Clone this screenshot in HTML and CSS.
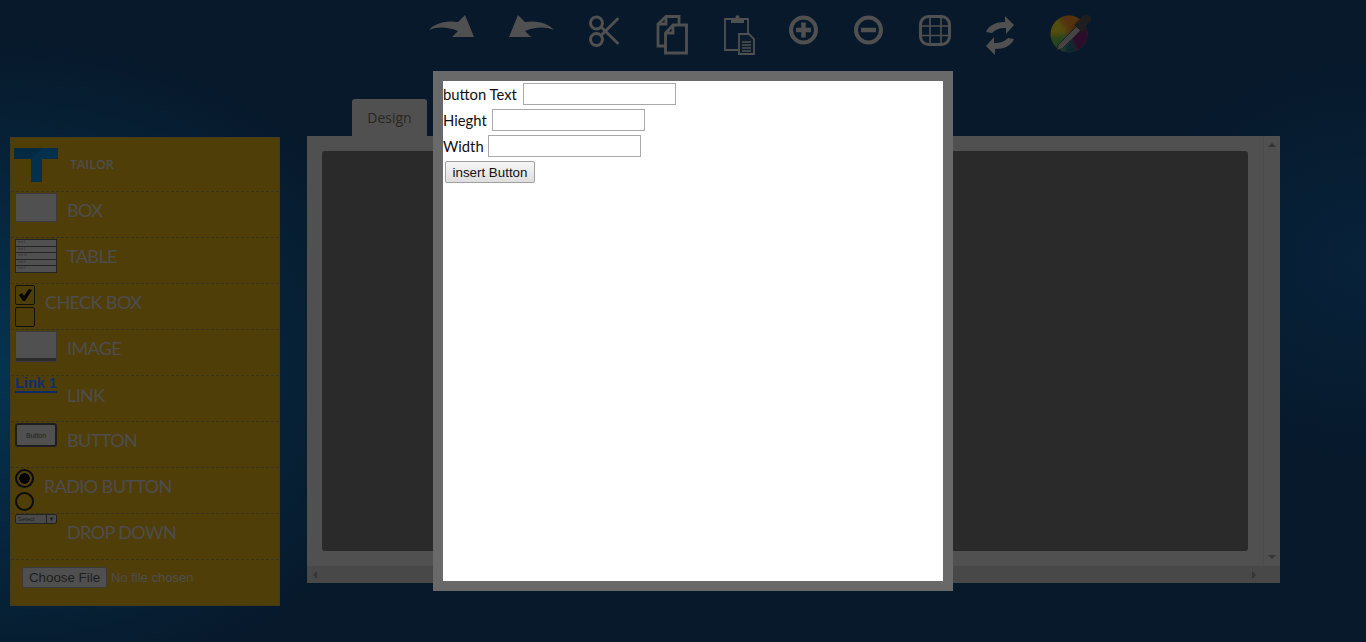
FILE: index.html
```html
<!DOCTYPE html>
<html lang="en">
<head>
<meta charset="utf-8">
<title>Tailor</title>
<link rel="stylesheet" href="styles.css">
</head>
<body>
<header class="toolbar">
  <svg class="ic" width="45" height="60" viewBox="429 0 45 60"><path class="fill" d="M429 30C434 24 444 20 458 22L465 15L474 37L452 37L458 31C449 27 438 26 429 30Z"/></svg>
  <svg class="ic" width="47" height="60" viewBox="508 0 47 60"><path class="fill" d="M554 30C549 24 539 20 525 22L518 15L509 37L531 37L525 31C534 27 545 26 554 30Z"/></svg>
  <svg class="ic" width="33" height="60" viewBox="589 0 33 60"><g class="line" stroke-width="3"><circle cx="596.500" cy="23" r="6"/><circle cx="596.500" cy="39.500" r="6"/><path d="M601 27L617.500 43M601 35.500L617.500 19" stroke-linecap="round"/></g></svg>
  <svg class="ic" width="33" height="60" viewBox="656 0 33 60"><g class="line" stroke-width="2.800"><path d="M665 46H658V24L666 16.500H679V25"/><path d="M666 16.500V24H658"/><path d="M673 25H686.500V53H665.500V33Z"/><path d="M673 25V33H665.500"/></g></svg>
  <svg class="ic" width="32" height="60" viewBox="723 0 32 60"><path class="line" stroke-width="1.800" d="M738 50H725V19H748V33"/><path class="fill" d="M731 19H735L736 15.500H739L740 19H744V23H731Z"/><path class="line-doc" d="M739 34H749L754 39V54H739Z"/><path class="line" stroke-width="1.300" d="M742 42H751M742 45H751M742 48H751M742 51H751"/></svg>
  <svg class="ic" width="31" height="60" viewBox="789 0 31 60"><circle class="line" stroke-width="4" cx="803.500" cy="30" r="12.500"/><path class="line" stroke-width="4.500" d="M796 30H811M803.500 22.500V37.500"/></svg>
  <svg class="ic" width="31" height="60" viewBox="854 0 31 60"><circle class="line" stroke-width="4" cx="868.500" cy="30" r="12.500"/><path class="line" stroke-width="4.500" d="M861 30H876"/></svg>
  <svg class="ic" width="32" height="60" viewBox="919 0 32 60"><g class="line"><rect x="920.500" y="16.500" width="29" height="28" rx="8" stroke-width="3"/><path stroke-width="1.600" d="M930 16V45M941 16V45M920 26H950M920 35.500H950"/></g></svg>
  <svg class="ic" width="31" height="60" viewBox="985 0 31 60"><path class="fill" d="M986 32C989 25 996 22 1005 22L1005 16L1014 25L1006 34L1006 28C1000 28 996 29 992 33Z"/><path class="fill" d="M1014 39C1011 46 1004 49 995 49L995 55L986 46L994 37L994 43C1000 43 1004 42 1008 38Z"/></svg>
  <svg class="ic" width="42" height="60" viewBox="1050 0 42 60">
    <defs>
      <clipPath id="wheel"><circle cx="1069" cy="34" r="18.500"/></clipPath>
      <filter id="soft"><feGaussianBlur stdDeviation="2.500"/></filter>
    </defs>
    <g clip-path="url(#wheel)">
      <circle cx="1069" cy="34" r="20" fill="#3a2d12"/>
      <g filter="url(#soft)">
        <path fill="#54300e" d="M1069 34L1056 12H1086Z"/>
        <path fill="#55500c" d="M1069 34L1056 14L1046 36Z"/>
        <path fill="#24461a" d="M1069 34L1046 38L1062 56Z"/>
        <path fill="#0c2636" d="M1069 34L1062 56H1080Z"/>
        <path fill="#2a0c2c" d="M1069 34L1080 56L1092 38L1086 20Z"/>
      </g>
    </g>
    <path fill="#444" stroke="#222" d="M1058 45L1057 50L1062 49L1081 30L1077 26Z"/>
    <path fill="#1e1e1e" d="M1074 25L1081 18C1084 13 1090 14 1091 18C1092 21 1090 23 1087 24L1083 33Z"/>
  </svg>
</header>

<main class="workspace">
  <aside class="palette">
    <div class="row row-brand">
      <svg class="logo" width="44" height="34" viewBox="0 0 44 34"><path fill="#022a43" d="M0 0H44V11H28V34H17V11H0Z"/><path fill="#03304d" d="M17 11L28 0H44V11H28V34H17Z"/></svg>
      <span class="brand">TAILOR</span>
    </div>
    <div class="row"><div class="thumb thumb-box"></div><span class="label">BOX</span></div>
    <div class="row">
      <div class="thumb thumb-table">
        <span class="cell">text 1</span><span class="cell">text 2</span><span class="cell">text 10</span><span class="cell">text 4</span><span class="cell">text 5</span>
      </div>
      <span class="label">TABLE</span>
    </div>
    <div class="row row-short">
      <div class="stack">
        <div class="check"><svg width="18" height="18" viewBox="0 0 18 18"><path fill="#000" d="M3 9L6 7L8 10L13 3L16 4L9 15H7Z"/></svg></div>
        <div class="check"></div>
      </div>
      <span class="label">CHECK BOX</span>
    </div>
    <div class="row"><div class="thumb thumb-image"><div class="player"></div></div><span class="label">IMAGE</span></div>
    <div class="row"><div class="thumb thumb-link">Link 1</div><span class="label label-low">LINK</span></div>
    <div class="row"><div class="thumb thumb-button">Button</div><span class="label">BUTTON</span></div>
    <div class="row row-short">
      <div class="stack stack-radio">
        <div class="radio radio-on"></div>
        <div class="radio"></div>
      </div>
      <span class="label">RADIO BUTTON</span>
    </div>
    <div class="row"><div class="thumb thumb-select"><span class="sel-text">Select</span><span class="sel-arrow">▼</span></div><span class="label">DROP DOWN</span></div>
    <div class="row-file">
      <button class="file-btn" type="button">Choose File</button>
      <span class="file-text">No file chosen</span>
    </div>
  </aside>

  <section class="editor">
    <div class="tab">Design</div>
    <div class="pane">
      <div class="pane-body">
        <div class="pane-view"><div class="canvas"></div></div>
        <div class="vbar"><i class="arr arr-up"></i><i class="arr arr-down"></i></div>
      </div>
      <div class="hbar"><i class="arr arr-left"></i><i class="arr arr-right"></i></div>
    </div>
  </section>
</main>

<div class="modal">
  <form class="modal-body">
    <div class="field"><label>button Text</label><input type="text"></div>
    <div class="field"><label class="lbl-height">Hieght</label><input type="text"></div>
    <div class="field"><label class="lbl-width">Width</label><input type="text"></div>
    <button class="insert" type="button">insert Button</button>
  </form>
</div>
</body>
</html>
```

FILE: styles.css
```css
* { box-sizing: border-box; }

html, body {
  margin: 0;
  height: 642px;
  overflow: hidden;
}

body {
  background-color: #07192b;
  background-image:
    radial-gradient(ellipse 420px 330px at 0 370px, #043350 0, rgba(4, 51, 80, 0) 100%),
    radial-gradient(ellipse 240px 200px at 1366px 260px, #07223a 0, rgba(7, 34, 58, 0) 100%);
  font-family: "Lato", "Open Sans", sans-serif;
}

.toolbar {
  display: flex;
  gap: 34px;
  height: 99px;
  padding-left: 429px;
}

.ic { display: block; flex: none; }

.fill { fill: #505050; }
.line { fill: none; stroke: #505050; }
.line-doc { fill: #0a1c2e; stroke: #505050; stroke-width: 1.8; }

.workspace {
  display: flex;
  align-items: flex-start;
  padding-left: 10px;
}

/* left palette */
.palette {
  flex: none;
  width: 270px;
  height: 469px;
  margin-top: 38px;
  background: #503e08;
  border: 1px solid #453b1a;
  color: #4d4d4f;
}

.row {
  display: flex;
  align-items: flex-start;
  height: 46px;
  padding-left: 4px;
  border-bottom: 1px dashed #37331c;
}

.row-brand {
  height: 54px;
  padding: 10px 0 0 3px;
}

.logo { flex: none; }

.brand {
  margin: 8px 0 0 12px;
  font-family: "Open Sans", sans-serif;
  font-size: 12.5px;
  font-weight: 600;
  line-height: 18px;
}

.label {
  margin: 5px 0 0 10px;
  font-size: 18px;
  letter-spacing: -0.6px;
  line-height: 26px;
  white-space: nowrap;
}

.label-low { margin-top: 6px; }

.thumb {
  flex: none;
  width: 42px;
  margin-top: 1px;
}

.thumb-box {
  height: 29px;
  background: #505050;
  border: 1px solid #3b3b3b;
}

.thumb-table {
  display: flex;
  flex-direction: column;
  gap: 1px;
  height: 34px;
  padding: 1px;
  background: #242424;
}

.cell {
  flex: 1;
  padding-left: 2px;
  background: #505050;
  color: #2c2c2c;
  font: 3px/5px "Liberation Sans", sans-serif;
}

.thumb-image {
  display: flex;
  flex-direction: column;
  justify-content: flex-end;
  height: 31px;
  background: #505050;
  border: 1px solid #3b3b3b;
}

.player { height: 3px; background: #2b2b2b; }

.thumb-link {
  height: 17px;
  margin-top: 0;
  border-bottom: 2px solid #0b2a6a;
  color: #0f2f70;
  font: bold 14.500px/15px "Liberation Sans", sans-serif;
}

.thumb-button {
  display: flex;
  align-items: center;
  justify-content: center;
  height: 24px;
  background: #505050;
  border: 2px solid #1e1e1e;
  border-radius: 3px;
  color: #222;
  font: 7px "Liberation Sans", sans-serif;
}

.thumb-select {
  display: flex;
  justify-content: space-between;
  height: 10px;
  margin-top: 0;
  background: #4a4a4a;
  border: 1px solid #222;
  border-radius: 2px;
  color: #1d1d1d;
  font: 6px/8px "Liberation Sans", sans-serif;
}

.sel-text { padding-left: 2px; }
.sel-arrow { width: 10px; border-left: 1px solid #222; text-align: center; }

.stack {
  display: flex;
  flex: none;
  flex-direction: column;
  gap: 2px;
  width: 20px;
  margin-top: 1px;
}

.check {
  width: 20px;
  height: 20px;
  border: 1px solid #111;
  border-radius: 2px;
}

.check svg { display: block; }

.stack-radio { gap: 4px; width: 19px; }

.radio {
  width: 19px;
  height: 19px;
  border: 2px solid #0c0c0c;
  border-radius: 50%;
}

.radio-on {
  background: radial-gradient(circle, #000 0 5px, transparent 5.500px);
}

.row-file {
  display: flex;
  align-items: flex-start;
  gap: 4px;
  padding: 7px 0 0 11px;
}

.file-btn {
  width: 85px;
  height: 21px;
  padding: 0;
  background: #4f4f4f;
  border: 1px solid #3a3a3a;
  border-radius: 2px;
  color: #1e1e1e;
  font: 13.333px "Liberation Sans", sans-serif;
}

.file-text {
  font: 13px/21px "Liberation Sans", sans-serif;
}

/* editor */
.editor {
  flex: none;
  width: 973px;
  margin-left: 27px;
}

.tab {
  width: 75px;
  height: 37px;
  margin-left: 45px;
  background: #505050;
  border-radius: 3px 3px 0 0;
  color: #2a2620;
  font: 14px/37px "Open Sans", sans-serif;
  text-align: center;
}

.pane {
  height: 447px;
  background: #505050;
}

.pane-body { display: flex; height: 430px; }

.pane-view { flex: 1; padding: 15px 15px 0; }

.canvas {
  height: 400px;
  background: #2a2a2a;
  border-radius: 3px;
}

.vbar {
  display: flex;
  flex: none;
  flex-direction: column;
  justify-content: space-between;
  align-items: center;
  width: 17px;
  padding: 7px 0;
  background: #505050;
  border-left: 1px solid #4c4c4c;
}

.hbar {
  display: flex;
  justify-content: space-between;
  align-items: center;
  height: 17px;
  padding: 0 24px 0 6px;
  background: #484848;
}

.arr { display: block; width: 0; height: 0; border-style: solid; border-color: transparent; }
.arr-up { border-width: 0 4px 4px; border-bottom-color: #353535; }
.arr-down { border-width: 4px 4px 0; border-top-color: #353535; }
.arr-left { border-width: 4px 4px 4px 0; border-right-color: #353535; }
.arr-right { border-width: 4px 0 4px 4px; border-left-color: #353535; }

/* modal */
.modal {
  position: absolute;
  left: 433px;
  top: 71px;
  width: 520px;
  height: 520px;
  border: 10px solid #696969;
  background: #fff;
}

.modal-body { padding-top: 2px; }

.field {
  display: flex;
  align-items: center;
  height: 22px;
  margin-bottom: 4px;
  color: #111;
  font: 14.800px "Lato", sans-serif;
}

.field label { margin-right: 6px; }
.field .lbl-height { margin-right: 5px; }
.field .lbl-width { margin-right: 4px; }

.field input {
  width: 153px;
  height: 22px;
  padding: 1px 2px;
  background: #fff;
  border: 1px solid #a9a9a9;
}

.insert {
  display: block;
  width: 90px;
  height: 22px;
  margin-left: 2px;
  padding: 0;
  background: linear-gradient(#f6f6f6, #dedede);
  border: 1px solid #a0a0a0;
  border-radius: 2px;
  color: #111;
  font: 13.333px "Liberation Sans", sans-serif;
}
```
